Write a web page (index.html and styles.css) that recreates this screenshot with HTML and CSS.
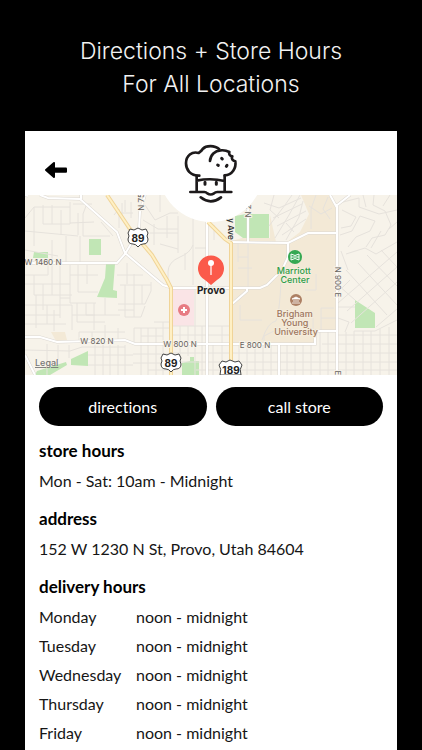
FILE: index.html
```html
<!DOCTYPE html>
<html lang="en">
<head>
<meta charset="UTF-8">
<meta name="viewport" content="width=device-width, initial-scale=1">
<title>Directions + Store Hours</title>
<link rel="stylesheet" href="styles.css">
</head>
<body>
<h1 class="headline">Directions + Store Hours<br>For All Locations</h1>

<main class="screen">
  <header class="top-bar">
    <button class="back-button" aria-label="Back">
      <svg width="24" height="18" viewBox="0 0 24 18">
        <path d="M2 9 L10 2 V16 Z" fill="#000" stroke="#000" stroke-width="2" stroke-linejoin="round"/>
        <rect x="9" y="6.500" width="14" height="5.200" rx="1" fill="#000"/>
      </svg>
    </button>
    <!-- Chef hat logo, hangs over the map -->
    <svg class="logo" width="106" height="92" viewBox="158 131 106 92">
      <circle cx="211" cy="169" r="53" fill="#fff"/>
      <g transform="translate(170 135) scale(.3333)" fill="none" stroke="#1d1a1b" stroke-width="8" stroke-linecap="round" stroke-linejoin="round">
        <path d="M88 122 C60 122 48 104 48 85 C48 62 66 48 86 54 C90 50 94 49 98 42 C108 31 134 30 148 43"/>
        <path d="M120 78 C121 59 135 47 152 46 C163 45 171 47 178 51 C176 59 180 63 187 64 C183 71 188 78 196 79 C199 99 187 120 164 121"/>
        <path d="M80 122 V169 M164 122 V169 M80 137 Q122 128 164 138"/>
        <path d="M61 171 H103 Q108 171 112 175 Q122 182 132 175 Q136 171 142 171 H184"/>
        <path d="M92 187 Q122 211 153 187"/>
        <path d="M105 142 V148 M139 142 V148" stroke-width="9"/>
        <path d="M143 90 l2 1 M155 70 l2 2 M169 94 l2 -3" stroke-width="9"/>
      </g>
    </svg>
  </header>

  <svg class="map" viewBox="25 195 372 180" role="img" aria-label="Map of Provo">
    <rect x="25" y="195" width="372" height="180" fill="#f7f3ea"/>
    <!-- campus and parks -->
    <path class="campus" d="M250 195 H330 L337 207 V332 H315 V344 H232 V241 L242 238 H270 V195 Z"/>
    <path d="M250 195 H301 L309 214 L300 232 L287 242 H276 L270 215 H250 Z" fill="#f7f3ea"/>
    <path class="campus" d="M51 332 L65 332 L67 340 L56 341 Z"/>
    <path class="park" d="M89 239 H101 V255 H89 Z M34 252 H48 V258 H33 Z M106 264 H115 L113 290 L117 291 V298 L97 297 L105 278 Z M71 359 L88 351 V366 L71 365 Z M37 371 L66 362 L67 365 L50 375 H35 Z M182 363 L190 361 V357 H194 V361 H199 V375 H182 Z M235 216 L246 214 H269 V238 H243 L235 232 Z M355 300 L375 313 V328 H355 Z"/>
    <path d="M173 289 H194 V326 H173 Z" fill="#fae4e6"/>
    <!-- side streets -->
    <g class="street">
      <path d="M25 218 L34 207 H70 M34 207 V246 M25 231 L78 236 M43 205 V224 H70 V202 M52 205 V224 M61 210 V235 M73 204 H92 M78 213 V235 M86 206 L83 214 V236 H110 M70 223 L94 222 M25 250 L58 256 M52 240 V263 M66 236 V263 M80 236 V263 M101 222 L113 236 M114 215 L119 209 V228 M122 203 V215 M125 200 V212 M131 202 V218 M118 213 H133"/>
      <path d="M145 205 L155 220 L170 213 H178 M160 195 V212 M143 220 L158 229 H178 M178 216 V253 M167 216 V238 M154 224 V245 M150 233 H178 M160 244 L178 249 M193 195 V285 M193 245 Q190 253 180 257 Q168 262 168 272 V282 M185 253 V270"/>
      <path d="M25 275 H48 V264 M25 284 H70 M34 275 V295 H72 M43 284 V310 M52 264 V295 M60 264 V318 M25 305 H72 V330 M25 315 H60 M36 295 V328 M25 324 H66 M47 305 V324 M54 310 V331 M70 265 V303 H96 M78 265 V292 H98 M87 265 V284 M70 275 H98 M77 303 V322 H105 M86 303 V315 H120 M94 303 V330 M105 298 V315 M72 315 H95 M60 298 H70"/>
      <path d="M117 275 H143 M127 263 V284 M120 285 H151 M125 285 V317 H141 L145 306 M134 274 V317 M118 304 H145 L151 291 V282 M118 310 H134 M142 285 V304 M79 332 H125 M79 332 V341 M92 332 V341 M105 325 V341 M118 328 V341 M134 328 V343 M141 328 V375 M148 328 V375 M156 328 V375 M163 322 V375 M134 328 H171 M154 322 H171 M141 336 H163 M133 354 H171 M133 363 H171 M148 370 H171"/>
      <path d="M25 350 L70 351 L82 347 H125 M95 345 V375 M103 345 V375 M110 345 V375 M118 345 V375 M125 345 V375 M88 355 H133 M88 365 H133 M47 344 V375 M58 345 V360 M69 345 V358 M171 335 H230 M180 326 V360 M188 326 V356 M195 289 V375 M202 326 V375 M213 345 V375 M222 326 V375 M171 326 H230 M171 353 H397 M171 362 H397 M196 370 H397"/>
      <path d="M214 225 V240 M195 248 H206 M238 257 H248 M238 243 V262 M238 268 H252 M248 243 V288 M240 305 V320 H262 M262 340 Q268 322 276 321 Q280 310 281 280 M264 343 V336 L280 328 M316 274 V290 H305 M313 318 V331 M321 308 V331 H336 M321 318 H336 M321 308 H334"/>
      <path d="M264 203 L279 208 L301 198 M273 218 L302 204 M277 226 L306 211 M282 235 L306 219 M269 226 L285 205 L292 195 M275 238 L289 215 L300 195 M286 240 L299 217 L303 201 M274 195 L270 210 L279 218 M309 206 L321 214 L332 208 M316 195 L311 209 L311 229 M328 197 L323 209 L330 219 M294 232 L286 223"/>
      <path d="M343 202 L359 198 V207 L379 214 L397 210 M342 210 L356 217 L351 226 L341 228 M340 235 L352 231 L360 216 L375 221 L370 231 L356 237 L348 247 M363 195 L366 207 M374 195 L373 205 L385 211 L391 225 L385 235 L372 238 L366 247 M390 195 L383 206 M397 222 L389 229 M346 254 L365 248 L376 254 L397 242 M371 248 L381 231 M341 251 L348 270"/>
      <path d="M338 303 L397 252 M347 311 L397 267 M351 323 L397 282 M376 327 L397 309 M346 270 L387 315 M358 263 L397 305 M367 255 L397 286 M381 250 L397 267 M338 285 L355 300 M338 318 L349 322 L345 332 M338 307 H355 M338 292 L350 280 M354 331 L375 331 L397 320"/>
      <path d="M239 345 V375 M247 345 V375 M255 345 V375 M263 345 V375 M271 345 V375 M287 345 V375 M295 345 V375 M303 345 V375 M311 345 V375 M320 331 V375 M328 331 V375 M346 332 V375 M354 331 V375 M363 331 V375 M371 331 V375 M380 329 V375 M389 327 V375 M338 335 H397 M322 344 H397"/>
    </g>
    <!-- bigger roads, grey casing under a white line -->
    <g class="road">
      <path id="roads" d="M25 195 L28 196 M40 195 L48 198 L80 199 L117 232 L123 248 L125 253 L163 285 L172 288 H260 L267 285 L282 270 L288 257 V243 M81 195 V199 M25 263 H117 L125 254 L131 244 M25 337 H40 L57 342 L125 340 L135 344 H315 V331 H337 M231 242 L288 243 L308 233 H337 M337 206 V375 M330 195 L336 206 L350 195 M145 195 L140 212 L139 228 M207 222 V375 M248 195 V243 M279 345 V375 M25 355 L35 375 M232 304 L247 291 V288"/>
      <use href="#roads" class="road-fill"/>
    </g>
    <g class="highway">
      <path id="highways" d="M107 195 L130 229 L152 255 L167 280 L171 288 V375 M208 222 L225 239 L231 243 V375"/>
      <use href="#highways" class="highway-fill"/>
    </g>
    <!-- highway shields -->
    <g class="shield">
      <path id="shield" d="M130 229 L134 230 L138 228 L142 230 L146 229 L148 233 Q146 236 148 239 Q148 244 143 244 Q140 244 138 247 Q136 244 133 244 Q128 244 128 239 Q130 236 128 233 Z"/>
      <use href="#shield" x="33" y="125"/>
      <path d="M222 361 L226 362 L230 360 L235 362 L239 361 L242 365 Q239 369 241 375 H220 Q222 369 219 365 Z"/>
      <text x="138" y="242">89</text>
      <text x="171" y="367">89</text>
      <text x="231" y="374">189</text>
    </g>
    <g class="street-name">
      <text x="43" y="265">W 1460 N</text>
      <text x="97" y="344">W 820 N</text>
      <text x="180" y="347">W 800 N</text>
      <text x="255" y="348">E 800 N</text>
      <text transform="translate(335 282) rotate(90)">N 900 E</text>
      <text transform="translate(144 202) rotate(-90)">N 75</text>
      <text transform="translate(251 211) rotate(-90)">N 2</text>
      <text transform="translate(335 373) rotate(90)">E</text>
      <text class="avenue" transform="translate(228 229) rotate(90)">y Ave</text>
    </g>
    <!-- places -->
    <circle cx="295" cy="257" r="7" fill="#35a852"/>
    <path d="M291 254 q4 3 8 0 v6 q-4 -3 -8 0 Z M291 257 H299" fill="none" stroke="#fff"/>
    <text class="place green"><tspan x="295" y="274">Marriott</tspan> <tspan x="295" y="283">Center</tspan></text>
    <circle cx="296" cy="300" r="6" fill="#ad8064"/>
    <path d="M292 299 L296 297 L300 299 Z M293 301 H299 M292 303 H300" fill="#fff" stroke="#fff" stroke-width=".8"/>
    <text class="place brown"><tspan x="296" y="317">Brigham</tspan> <tspan x="296" y="326">Young</tspan> <tspan x="296" y="335">University</tspan></text>
    <circle cx="184" cy="310" r="6" fill="#e77b83"/>
    <path d="M184 307 V313 M181 310 H187" stroke="#fff" stroke-width="2"/>
    <!-- store pin -->
    <path d="M211 285 L205 280 A13 13 0 1 1 217 280 Z" fill="#fb5a4a"/>
    <path d="M211 264 V275" stroke="#ffe3df" stroke-width="1.500"/>
    <circle cx="211" cy="263" r="3" fill="#fff"/>
    <text class="city" x="211" y="294">Provo</text>
    <text class="legal" x="35" y="366">Legal</text>
  </svg>

  <div class="details">
    <div class="actions">
      <button class="action-button">directions</button>
      <button class="action-button">call store</button>
    </div>

    <h2>store hours</h2>
    <p>Mon - Sat: 10am - Midnight</p>

    <h2>address</h2>
    <p>152 W 1230 N St, Provo, Utah 84604</p>

    <h2>delivery hours</h2>
    <table class="hours">
      <tr><th scope="row">Monday</th><td>noon - midnight</td></tr>
      <tr><th scope="row">Tuesday</th><td>noon - midnight</td></tr>
      <tr><th scope="row">Wednesday</th><td>noon - midnight</td></tr>
      <tr><th scope="row">Thursday</th><td>noon - midnight</td></tr>
      <tr><th scope="row">Friday</th><td>noon - midnight</td></tr>
    </table>
  </div>
</main>
</body>
</html>
```
FILE: styles.css
```css
* {
  box-sizing: border-box;
}
body {
  margin: 0;
  min-height: 100vh;
  padding: 35px 25px 0;
  display: flex;
  flex-direction: column;
  background-color: #000;
  color: #161616;
  font-family: Lato, sans-serif;
  font-size: 16px;
  font-variant-ligatures: none;
}
.headline {
  margin: 0 0 30px;
  color: #f2f2f2;
  font-family: Inter, sans-serif;
  font-size: 23px;
  font-weight: 300;
  line-height: 33px;
  text-align: center;
}
.screen {
  flex: 1;
  background-color: #fff;
}
.top-bar {
  position: relative;
  height: 64px;
  padding: 24px 19px 0;
}
.back-button {
  display: block;
  padding: 6px 0;
  border: none;
  background: none;
  line-height: 0;
  cursor: pointer;
}
.logo {
  position: absolute;
  top: 0;
  left: 50%;
  transform: translateX(-50%);
}
/* Map */
.map {
  display: block;
  width: 100%;
  font-family: Inter, sans-serif;
}
.campus {
  fill: #f3e9d6;
}
.park {
  fill: #c1e6b5;
}
.street {
  fill: none;
  stroke: #e6e2dc;
}
.road {
  fill: none;
  stroke: #dcd8d2;
  stroke-width: 3px;
}
.road-fill {
  stroke: #fff;
  stroke-width: 2px;
}
.highway {
  fill: none;
  stroke: #f0d498;
  stroke-width: 4px;
}
.highway-fill {
  stroke: #fff0c4;
  stroke-width: 2px;
}
.shield {
  fill: #fff;
  stroke: #444;
}
.shield text {
  fill: #222;
  stroke: none;
  font-size: 10px;
  font-weight: 700;
  text-anchor: middle;
}
.street-name {
  fill: #66625e;
  font-size: 8px;
  text-anchor: middle;
  paint-order: stroke;
  stroke: #f7f3ea;
  stroke-width: 2px;
}
.avenue {
  fill: #333;
  font-weight: 600;
}
.place {
  font-size: 9px;
  font-weight: 500;
  text-anchor: middle;
  paint-order: stroke;
  stroke: #f5eddd;
  stroke-width: 2px;
}
.green {
  fill: #2f9d49;
}
.brown {
  fill: #9d765e;
}
.city {
  fill: #222;
  font-size: 10px;
  font-weight: 700;
  text-anchor: middle;
  paint-order: stroke;
  stroke: #f7f3ea;
  stroke-width: 2px;
}
.legal {
  fill: #777;
  font-size: 9px;
  font-weight: 500;
  text-decoration: underline;
}
/* Store details */
.details {
  padding: 12px 14px 0;
}
.actions {
  display: flex;
  gap: 9px;
  margin-bottom: 10px;
}
.action-button {
  flex: 1;
  height: 39px;
  border: none;
  border-radius: 20px;
  background-color: #000;
  color: #fff;
  font-family: inherit;
  font-size: 16px;
  font-variant-ligatures: none;
  cursor: pointer;
}
h2 {
  margin: 0;
  color: #000;
  font-size: 17px;
  font-weight: 700;
  line-height: 30px;
}
p {
  margin: 0 0 9px;
  line-height: 29px;
}
.hours {
  border-collapse: collapse;
  line-height: 29px;
}
.hours th {
  width: 97px;
  padding: 0;
  font-weight: 400;
  text-align: left;
}
.hours td {
  padding: 0;
}
```
